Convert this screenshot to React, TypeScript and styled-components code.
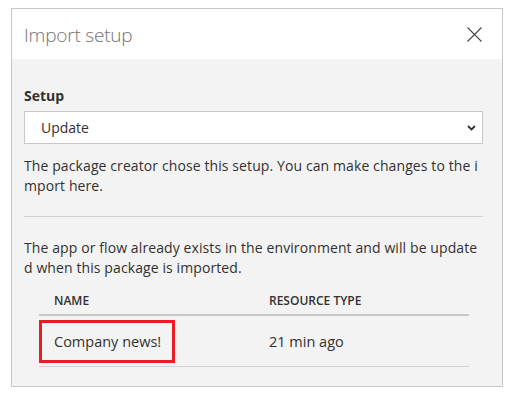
import React from "react";
import styled, { createGlobalStyle } from "styled-components";

const GlobalStyle = createGlobalStyle`
  html, body {
    margin: 0;
    padding: 0;
    background: #ffffff;
  }
  body {
    font-family: "Open Sans", "Noto Sans", "Liberation Sans", sans-serif;
    color: #323130;
  }
`;

const Page = styled.div`
  padding: 8px 11px;
`;

const Dialog = styled.section`
  width: 492px;
  height: 379px;
  box-sizing: border-box;
  border: 1px solid #c8c8c8;
  background: #f3f3f3;
  display: flex;
  flex-direction: column;
`;

const Header = styled.header`
  height: 50px;
  background: #ffffff;
  display: flex;
  align-items: center;
  justify-content: space-between;
  padding: 0 19px 0 12px;
  flex-shrink: 0;
`;

const Title = styled.h2`
  margin: 0;
  font-size: 19px;
  font-weight: 300;
  color: #737373;
  letter-spacing: -0.2px;
  padding-top: 2px;
`;

const CloseButton = styled.button`
  border: none;
  background: none;
  padding: 0;
  width: 16px;
  height: 16px;
  margin-right: 1px;
  display: flex;
  align-items: center;
  justify-content: center;
  color: #444;
  cursor: pointer;
`;

const Body = styled.div`
  padding: 27px 19px 0 12px;
  display: flex;
  flex-direction: column;
`;

const Label = styled.label`
  font-size: 14px;
  font-weight: 700;
  line-height: 20px;
  color: #323130;
`;

const SelectBox = styled.div`
  margin-top: 5px;
  height: 33px;
  box-sizing: border-box;
  border: 1px solid #c8c8c8;
  background: #ffffff;
  display: flex;
  align-items: center;
  justify-content: space-between;
  padding: 0 6px 0 16px;
  font-size: 14px;
  color: #323130;
`;

const Text = styled.p`
  margin: 0;
  font-size: 14px;
  line-height: 20px;
  letter-spacing: 0.1px;
  word-break: break-all;
  color: #323130;
`;

const Description = styled(Text)`
  margin-top: 12px;
`;

const Divider = styled.hr`
  margin: 20px 0 0;
  border: none;
  border-top: 1px solid #d2d2d2;
`;

const Notice = styled(Text)`
  margin-top: 21px;
`;

const Table = styled.div`
  margin: 7px 14px 0 15px;
`;

const HeadRow = styled.div`
  display: grid;
  grid-template-columns: 215px 1fr;
  height: 31px;
  align-items: center;
  border-bottom: 2px solid #c8c8c8;
  padding-top: 1px;
  box-sizing: border-box;
`;

const HeadCell = styled.div`
  font-size: 12px;
  font-weight: 600;
  text-transform: uppercase;
  color: #323130;
  padding-left: 15px;
`;

const Row = styled.div`
  display: grid;
  grid-template-columns: 215px 1fr;
  height: 51px;
  border-bottom: 1px solid #d2d2d2;
  box-sizing: border-box;
`;

const Cell = styled.div`
  font-size: 14.5px;
  color: #323130;
  padding-left: 15px;
  display: flex;
  align-items: center;
`;

const HighlightCell = styled.div`
  display: flex;
`;

const Highlight = styled.span`
  margin: 4px 0 3px;
  width: 136px;
  box-sizing: border-box;
  border: 3px solid #ed1c24;
  display: flex;
  align-items: center;
  padding-left: 12px;
  font-size: 14.5px;
`;

export default function App() {
  return (
    <>
      <GlobalStyle />
      <Page>
        <Dialog>
          <Header>
            <Title>Import setup</Title>
            <CloseButton aria-label="Close">
              <svg width="15" height="15" viewBox="0 0 15 15">
                <path d="M0.5 0.5 L14.5 14.5 M14.5 0.5 L0.5 14.5" stroke="currentColor" strokeWidth="1.1" fill="none" />
              </svg>
            </CloseButton>
          </Header>
          <Body>
            <Label>Setup</Label>
            <SelectBox>
              <span>Update</span>
              <svg width="9" height="6" viewBox="0 0 9 6">
                <path d="M1 1 L4.5 4.5 L8 1" stroke="#333" strokeWidth="1.8" fill="none" />
              </svg>
            </SelectBox>
            <Description>
              The package creator chose this setup. You can make changes to the import here.
            </Description>
            <Divider />
            <Notice>
              The app or flow already exists in the environment and will be updated when this package is imported.
            </Notice>
            <Table>
              <HeadRow>
                <HeadCell>Name</HeadCell>
                <HeadCell>Resource type</HeadCell>
              </HeadRow>
              <Row>
                <HighlightCell>
                  <Highlight>Company news!</Highlight>
                </HighlightCell>
                <Cell>21 min ago</Cell>
              </Row>
            </Table>
          </Body>
        </Dialog>
      </Page>
    </>
  );
}
